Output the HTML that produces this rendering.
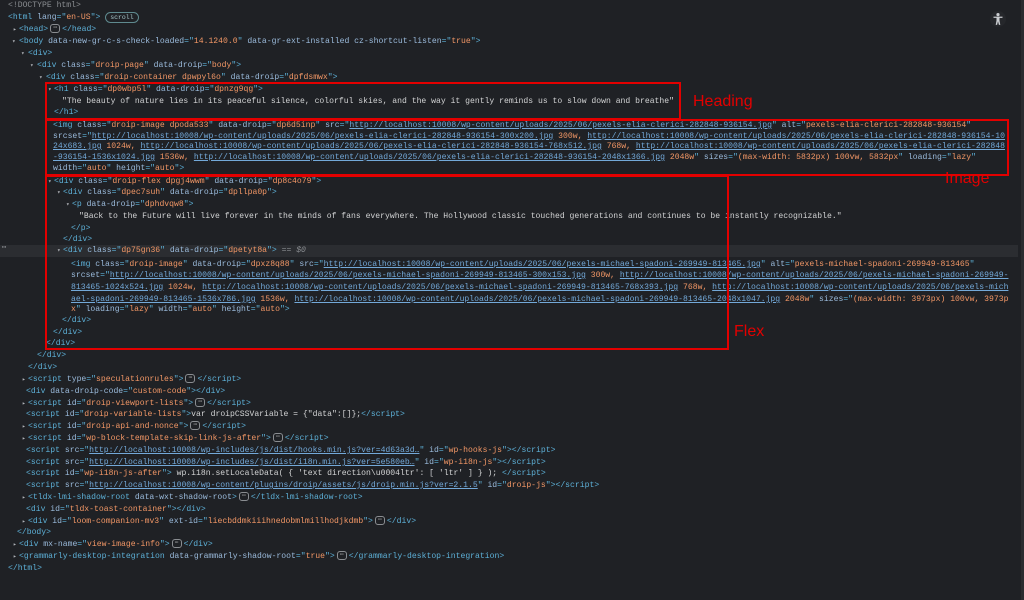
<!DOCTYPE html>
<html><head><style>
body{margin:0;width:1024px;height:600px;background:#1f2125;overflow:hidden;position:relative;font-family:"Liberation Mono",monospace;font-size:8.1px;color:#d2d3d4}
.l{position:absolute;left:0;right:6px;height:12px;line-height:12px;white-space:pre;overflow:hidden}
.t{color:#5db0d7}.a{color:#9bbbdc}.v{color:#f29766}.u{color:#73a9d9;text-decoration:underline}.x{color:#d2d3d4}.g{color:#8a8d91}
.ar{position:absolute;color:#b0b3b8;font-size:6px}
.e{display:inline-block;width:8px;height:7px;border:1px solid #8a8d91;border-radius:3px;font-size:6px;line-height:5px;text-align:center;color:#ccc;vertical-align:middle;margin:0 2px}
.box{position:absolute;border:2px solid #e30000;box-sizing:border-box}
.lab{position:absolute;color:#e30000;font-family:"Liberation Sans",sans-serif;font-size:16px}
.sel{position:absolute;left:0;right:6px;top:245px;height:12px;background:#2b2d31}
</style></head><body>
<div class="sel"></div>
<div style="position:absolute;right:0;top:0;width:3px;height:600px;background:#2a2c30"></div>
<svg style="position:absolute;left:990px;top:11px" width="16" height="16" viewBox="0 0 16 16"><circle cx="8" cy="8" r="8" fill="#25272b"/><circle cx="8" cy="3.6" r="1.6" fill="#c9ccd0"/><path d="M3.5 5.6h9v1.3h-3v2.6l0.8 4.4h-1.4l-0.9-3.6-0.9 3.6h-1.4l0.8-4.4V6.9h-3z" fill="#c9ccd0"/></svg>

<div class="l" style="top:0;padding-left:8px"><span class="g">&lt;!DOCTYPE html&gt;</span></div>
<div class="l" style="top:12px;padding-left:8px"><span class="t">&lt;html </span><span class="a">lang</span><span class="t">="</span><span class="v">en-US</span><span class="t">"&gt;</span> <span style="display:inline-block;border:1px solid #5f8a8f;border-radius:6px;padding:0 4px;line-height:9px;color:#a8c7cc;font-size:6.5px">scroll</span></div>
<div class="l" style="top:24px;padding-left:19px"><span class="t">&lt;head&gt;</span><span class="e">⋯</span><span class="t">&lt;/head&gt;</span></div>
<div class="l" style="top:36px;padding-left:19px"><span class="t">&lt;body </span><span class="a">data-new-gr-c-s-check-loaded</span><span class="t">="</span><span class="v">14.1240.0</span><span class="t">" </span><span class="a">data-gr-ext-installed cz-shortcut-listen</span><span class="t">="</span><span class="v">true</span><span class="t">"&gt;</span></div>
<div class="l" style="top:48px;padding-left:28px"><span class="t">&lt;div&gt;</span></div>
<div class="l" style="top:60px;padding-left:37px"><span class="t">&lt;div </span><span class="a">class</span><span class="t">="</span><span class="v">droip-page</span><span class="t">" </span><span class="a">data-droip</span><span class="t">="</span><span class="v">body</span><span class="t">"&gt;</span></div>
<div class="l" style="top:72px;padding-left:46px"><span class="t">&lt;div </span><span class="a">class</span><span class="t">="</span><span class="v">droip-container dpwpyl6o</span><span class="t">" </span><span class="a">data-droip</span><span class="t">="</span><span class="v">dpfdsmwx</span><span class="t">"&gt;</span></div>
<div class="l" style="top:84px;padding-left:54px"><span class="t">&lt;h1 </span><span class="a">class</span><span class="t">="</span><span class="v">dp0wbp5l</span><span class="t">" </span><span class="a">data-droip</span><span class="t">="</span><span class="v">dpnzg9qg</span><span class="t">"&gt;</span></div>
<div class="l" style="top:96px;padding-left:62px">"The beauty of nature lies in its peaceful silence, colorful skies, and the way it gently reminds us to slow down and breathe"</div>
<div class="l" style="top:107px;padding-left:54px"><span class="t">&lt;/h1&gt;</span></div>
<div class="l" style="top:120px;padding-left:53px"><span class="t">&lt;img </span><span class="a">class</span><span class="t">="</span><span class="v">droip-image dpoda533</span><span class="t">" </span><span class="a">data-droip</span><span class="t">="</span><span class="v">dp6d5inp</span><span class="t">" </span><span class="a">src</span><span class="t">="</span><span class="u">http://localhost:10008/wp-content/uploads/2025/06/pexels-elia-clerici-282848-936154.jpg</span><span class="t">" </span><span class="a">alt</span><span class="t">="</span><span class="v">pexels-elia-clerici-282848-936154</span><span class="t">"</span></div>
<div class="l" style="top:131px;padding-left:53px;right:15px"><span class="a">srcset</span><span class="t">="</span><span class="u">http://localhost:10008/wp-content/uploads/2025/06/pexels-elia-clerici-282848-936154-300x200.jpg</span><span class="v"> 300w, </span><span class="u">http://localhost:10008/wp-content/uploads/2025/06/pexels-elia-clerici-282848-936154-10</span></div>
<div class="l" style="top:141px;padding-left:53px;right:15px"><span class="u">24x683.jpg</span><span class="v"> 1024w, </span><span class="u">http://localhost:10008/wp-content/uploads/2025/06/pexels-elia-clerici-282848-936154-768x512.jpg</span><span class="v"> 768w, </span><span class="u">http://localhost:10008/wp-content/uploads/2025/06/pexels-elia-clerici-282848</span></div>
<div class="l" style="top:152px;padding-left:53px;right:15px"><span class="u">-936154-1536x1024.jpg</span><span class="v"> 1536w, </span><span class="u">http://localhost:10008/wp-content/uploads/2025/06/pexels-elia-clerici-282848-936154-2048x1366.jpg</span><span class="v"> 2048w</span><span class="t">" </span><span class="a">sizes</span><span class="t">="</span><span class="v">(max-width: 5832px) 100vw, 5832px</span><span class="t">" </span><span class="a">loading</span><span class="t">="</span><span class="v">lazy</span><span class="t">"</span></div>
<div class="l" style="top:163px;padding-left:53px"><span class="a">width</span><span class="t">="</span><span class="v">auto</span><span class="t">" </span><span class="a">height</span><span class="t">="</span><span class="v">auto</span><span class="t">"&gt;</span></div>
<div class="l" style="top:176px;padding-left:54px"><span class="t">&lt;div </span><span class="a">class</span><span class="t">="</span><span class="v">droip-flex dpgj4wwm</span><span class="t">" </span><span class="a">data-droip</span><span class="t">="</span><span class="v">dp8c4o79</span><span class="t">"&gt;</span></div>
<div class="l" style="top:187px;padding-left:63px"><span class="t">&lt;div </span><span class="a">class</span><span class="t">="</span><span class="v">dpec7suh</span><span class="t">" </span><span class="a">data-droip</span><span class="t">="</span><span class="v">dpllpa0p</span><span class="t">"&gt;</span></div>
<div class="l" style="top:199px;padding-left:72px"><span class="t">&lt;p </span><span class="a">data-droip</span><span class="t">="</span><span class="v">dphdvqw8</span><span class="t">"&gt;</span></div>
<div class="l" style="top:211px;padding-left:79px">"Back to the Future will live forever in the minds of fans everywhere. The Hollywood classic touched generations and continues to be instantly recognizable."</div>
<div class="l" style="top:223px;padding-left:71px"><span class="t">&lt;/p&gt;</span></div>
<div class="l" style="top:234px;padding-left:63px"><span class="t">&lt;/div&gt;</span></div>
<div class="l" style="top:245px;padding-left:63px"><span class="t">&lt;div </span><span class="a">class</span><span class="t">="</span><span class="v">dp75gn36</span><span class="t">" </span><span class="a">data-droip</span><span class="t">="</span><span class="v">dpetyt8a</span><span class="t">"&gt;</span><span class="g"> == <i>$0</i></span></div>
<div class="l" style="top:259px;padding-left:71px"><span class="t">&lt;img </span><span class="a">class</span><span class="t">="</span><span class="v">droip-image</span><span class="t">" </span><span class="a">data-droip</span><span class="t">="</span><span class="v">dpxz8q88</span><span class="t">" </span><span class="a">src</span><span class="t">="</span><span class="u">http://localhost:10008/wp-content/uploads/2025/06/pexels-michael-spadoni-269949-813465.jpg</span><span class="t">" </span><span class="a">alt</span><span class="t">="</span><span class="v">pexels-michael-spadoni-269949-813465</span><span class="t">"</span></div>
<div class="l" style="top:270px;padding-left:71px"><span class="a">srcset</span><span class="t">="</span><span class="u">http://localhost:10008/wp-content/uploads/2025/06/pexels-michael-spadoni-269949-813465-300x153.jpg</span><span class="v"> 300w, </span><span class="u">http://localhost:10008/wp-content/uploads/2025/06/pexels-michael-spadoni-269949-</span></div>
<div class="l" style="top:282px;padding-left:71px"><span class="u">813465-1024x524.jpg</span><span class="v"> 1024w, </span><span class="u">http://localhost:10008/wp-content/uploads/2025/06/pexels-michael-spadoni-269949-813465-768x393.jpg</span><span class="v"> 768w, </span><span class="u">http://localhost:10008/wp-content/uploads/2025/06/pexels-mich</span></div>
<div class="l" style="top:294px;padding-left:71px"><span class="u">ael-spadoni-269949-813465-1536x786.jpg</span><span class="v"> 1536w, </span><span class="u">http://localhost:10008/wp-content/uploads/2025/06/pexels-michael-spadoni-269949-813465-2048x1047.jpg</span><span class="v"> 2048w</span><span class="t">" </span><span class="a">sizes</span><span class="t">="</span><span class="v">(max-width: 3973px) 100vw, 3973p</span></div>
<div class="l" style="top:304px;padding-left:71px"><span class="v">x</span><span class="t">" </span><span class="a">loading</span><span class="t">="</span><span class="v">lazy</span><span class="t">" </span><span class="a">width</span><span class="t">="</span><span class="v">auto</span><span class="t">" </span><span class="a">height</span><span class="t">="</span><span class="v">auto</span><span class="t">"&gt;</span></div>
<div class="l" style="top:315px;padding-left:62px"><span class="t">&lt;/div&gt;</span></div>
<div class="l" style="top:327px;padding-left:53px"><span class="t">&lt;/div&gt;</span></div>
<div class="l" style="top:338px;padding-left:46px"><span class="t">&lt;/div&gt;</span></div>
<div class="l" style="top:350px;padding-left:37px"><span class="t">&lt;/div&gt;</span></div>
<div class="l" style="top:362px;padding-left:28px"><span class="t">&lt;/div&gt;</span></div>
<div class="l" style="top:374px;padding-left:28px"><span class="t">&lt;script </span><span class="a">type</span><span class="t">="</span><span class="v">speculationrules</span><span class="t">"&gt;</span><span class="e">⋯</span><span class="t">&lt;/script&gt;</span></div>
<div class="l" style="top:386px;padding-left:26px"><span class="t">&lt;div </span><span class="a">data-droip-code</span><span class="t">="</span><span class="v">custom-code</span><span class="t">"&gt;&lt;/div&gt;</span></div>
<div class="l" style="top:398px;padding-left:28px"><span class="t">&lt;script </span><span class="a">id</span><span class="t">="</span><span class="v">droip-viewport-lists</span><span class="t">"&gt;</span><span class="e">⋯</span><span class="t">&lt;/script&gt;</span></div>
<div class="l" style="top:409px;padding-left:26px"><span class="t">&lt;script </span><span class="a">id</span><span class="t">="</span><span class="v">droip-variable-lists</span><span class="t">"&gt;</span>var droipCSSVariable = {"data":[]};<span class="t">&lt;/script&gt;</span></div>
<div class="l" style="top:421px;padding-left:28px"><span class="t">&lt;script </span><span class="a">id</span><span class="t">="</span><span class="v">droip-api-and-nonce</span><span class="t">"&gt;</span><span class="e">⋯</span><span class="t">&lt;/script&gt;</span></div>
<div class="l" style="top:433px;padding-left:28px"><span class="t">&lt;script </span><span class="a">id</span><span class="t">="</span><span class="v">wp-block-template-skip-link-js-after</span><span class="t">"&gt;</span><span class="e">⋯</span><span class="t">&lt;/script&gt;</span></div>
<div class="l" style="top:445px;padding-left:26px"><span class="t">&lt;script </span><span class="a">src</span><span class="t">="</span><span class="u">http://localhost:10008/wp-includes/js/dist/hooks.min.js?ver=4d63a3d…</span><span class="t">" </span><span class="a">id</span><span class="t">="</span><span class="v">wp-hooks-js</span><span class="t">"&gt;&lt;/script&gt;</span></div>
<div class="l" style="top:457px;padding-left:26px"><span class="t">&lt;script </span><span class="a">src</span><span class="t">="</span><span class="u">http://localhost:10008/wp-includes/js/dist/i18n.min.js?ver=5e580eb…</span><span class="t">" </span><span class="a">id</span><span class="t">="</span><span class="v">wp-i18n-js</span><span class="t">"&gt;&lt;/script&gt;</span></div>
<div class="l" style="top:468px;padding-left:26px"><span class="t">&lt;script </span><span class="a">id</span><span class="t">="</span><span class="v">wp-i18n-js-after</span><span class="t">"&gt;</span> wp.i18n.setLocaleData( { 'text direction\u0004ltr': [ 'ltr' ] } ); <span class="t">&lt;/script&gt;</span></div>
<div class="l" style="top:480px;padding-left:26px"><span class="t">&lt;script </span><span class="a">src</span><span class="t">="</span><span class="u">http://localhost:10008/wp-content/plugins/droip/assets/js/droip.min.js?ver=2.1.5</span><span class="t">" </span><span class="a">id</span><span class="t">="</span><span class="v">droip-js</span><span class="t">"&gt;&lt;/script&gt;</span></div>
<div class="l" style="top:492px;padding-left:28px"><span class="t">&lt;tldx-lmi-shadow-root </span><span class="a">data-wxt-shadow-root</span><span class="t">&gt;</span><span class="e">⋯</span><span class="t">&lt;/tldx-lmi-shadow-root&gt;</span></div>
<div class="l" style="top:504px;padding-left:26px"><span class="t">&lt;div </span><span class="a">id</span><span class="t">="</span><span class="v">tldx-toast-container</span><span class="t">"&gt;&lt;/div&gt;</span></div>
<div class="l" style="top:516px;padding-left:28px"><span class="t">&lt;div </span><span class="a">id</span><span class="t">="</span><span class="v">loom-companion-mv3</span><span class="t">" </span><span class="a">ext-id</span><span class="t">="</span><span class="v">liecbddmkiiihnedobmlmillhodjkdmb</span><span class="t">"&gt;</span><span class="e">⋯</span><span class="t">&lt;/div&gt;</span></div>
<div class="l" style="top:527px;padding-left:17px"><span class="t">&lt;/body&gt;</span></div>
<div class="l" style="top:539px;padding-left:19px"><span class="t">&lt;div </span><span class="a">mx-name</span><span class="t">="</span><span class="v">view-image-info</span><span class="t">"&gt;</span><span class="e">⋯</span><span class="t">&lt;/div&gt;</span></div>
<div class="l" style="top:551px;padding-left:19px"><span class="t">&lt;grammarly-desktop-integration </span><span class="a">data-grammarly-shadow-root</span><span class="t">="</span><span class="v">true</span><span class="t">"&gt;</span><span class="e">⋯</span><span class="t">&lt;/grammarly-desktop-integration&gt;</span></div>
<div class="l" style="top:563px;padding-left:8px"><span class="t">&lt;/html&gt;</span></div>

<div class="ar" style="left:13px;top:26px">▸</div>
<div class="ar" style="left:12px;top:38px">▾</div>
<div class="ar" style="left:21px;top:50px">▾</div>
<div class="ar" style="left:30px;top:62px">▾</div>
<div class="ar" style="left:39px;top:74px">▾</div>
<div class="ar" style="left:48px;top:86px">▾</div>
<div class="ar" style="left:48px;top:178px">▾</div>
<div class="ar" style="left:57px;top:189px">▾</div>
<div class="ar" style="left:66px;top:201px">▾</div>
<div class="ar" style="left:57px;top:247px">▾</div>
<div class="ar" style="left:22px;top:376px">▸</div>
<div class="ar" style="left:22px;top:400px">▸</div>
<div class="ar" style="left:22px;top:423px">▸</div>
<div class="ar" style="left:22px;top:435px">▸</div>
<div class="ar" style="left:22px;top:494px">▸</div>
<div class="ar" style="left:22px;top:518px">▸</div>
<div class="ar" style="left:13px;top:541px">▸</div>
<div class="ar" style="left:13px;top:553px">▸</div>
<div class="ar" style="left:2px;top:243px;font-size:7px">⋯</div>

<div class="box" style="left:45px;top:82px;width:636px;height:38px"></div>
<div class="box" style="left:45px;top:119px;width:964px;height:57px"></div>
<div class="box" style="left:45px;top:175px;width:684px;height:175px"></div>
<div class="lab" style="left:693px;top:93px">Heading</div>
<div class="lab" style="left:945px;top:170px">Image</div>
<div class="lab" style="left:734px;top:323px">Flex</div>
</body></html>
